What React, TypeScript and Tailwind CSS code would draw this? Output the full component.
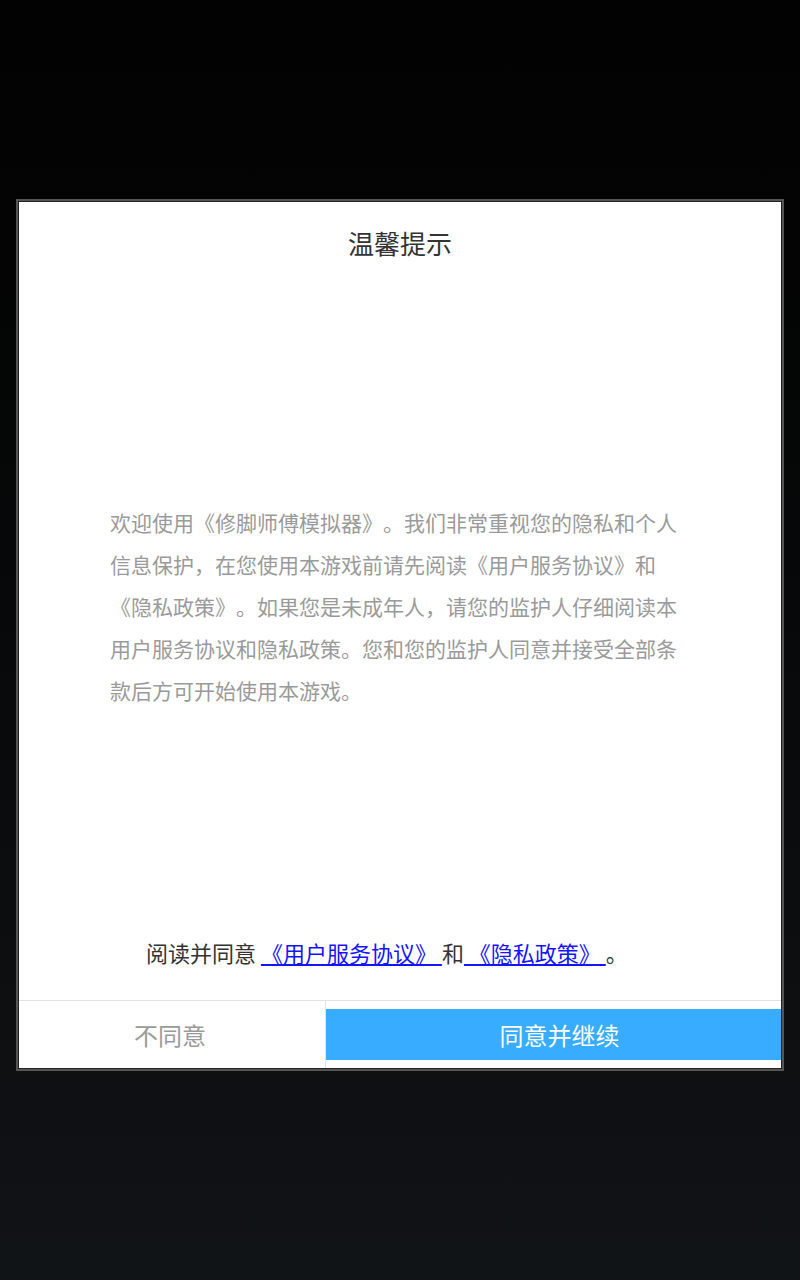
import React from 'react';

export default function App() {
  return (
    <div
      lang="zh-CN"
      className="w-[800px] h-[1280px] bg-gradient-to-b from-[#020202] to-[#111416] font-['Noto_Sans_CJK_SC',sans-serif] [text-spacing-trim:space-all] pt-[199px] pl-[16px]"
    >
      <div className="w-[768px] h-[872px] border-2 border-[#555555]">
        <div className="h-full border border-[#222222] bg-white flex flex-col">
          <div className="pt-[23px] text-center text-[26px] leading-[36px] text-[#333333]">温馨提示</div>

          <p className="mt-[240px] w-[580px] mx-auto text-[21px] leading-[42px] text-[#9a9a9a]">
            欢迎使用《修脚师傅模拟器》。我们非常重视您的隐私和个人信息保护，在您使用本游戏前请先阅读《用户服务协议》和《隐私政策》。如果您是未成年人，请您的监护人仔细阅读本用户服务协议和隐私政策。您和您的监护人同意并接受全部条款后方可开始使用本游戏。
          </p>

          <div className="mt-[225px] pl-[127px] text-[22px] leading-[32px] text-[#333333] whitespace-nowrap">
            阅读并同意 <a className="text-[#1414ff] underline">《用户服务协议》 </a>和<a className="text-[#1414ff] underline"> 《隐私政策》 </a>。
          </div>

          <div className="mt-auto flex border-t border-[#e3e3e3] h-[68px]">
            <div className="w-[306px] pr-[4px] flex items-center justify-center text-[24px] text-[#9a9a9a]">不同意</div>
            <div className="flex-1 border-l border-[#e3e3e3] py-[8px]">
              <div className="h-[51px] pl-[12px] bg-[#38acff] flex items-center justify-center text-[24px] text-white">同意并继续</div>
            </div>
          </div>
        </div>
      </div>
    </div>
  );
}
